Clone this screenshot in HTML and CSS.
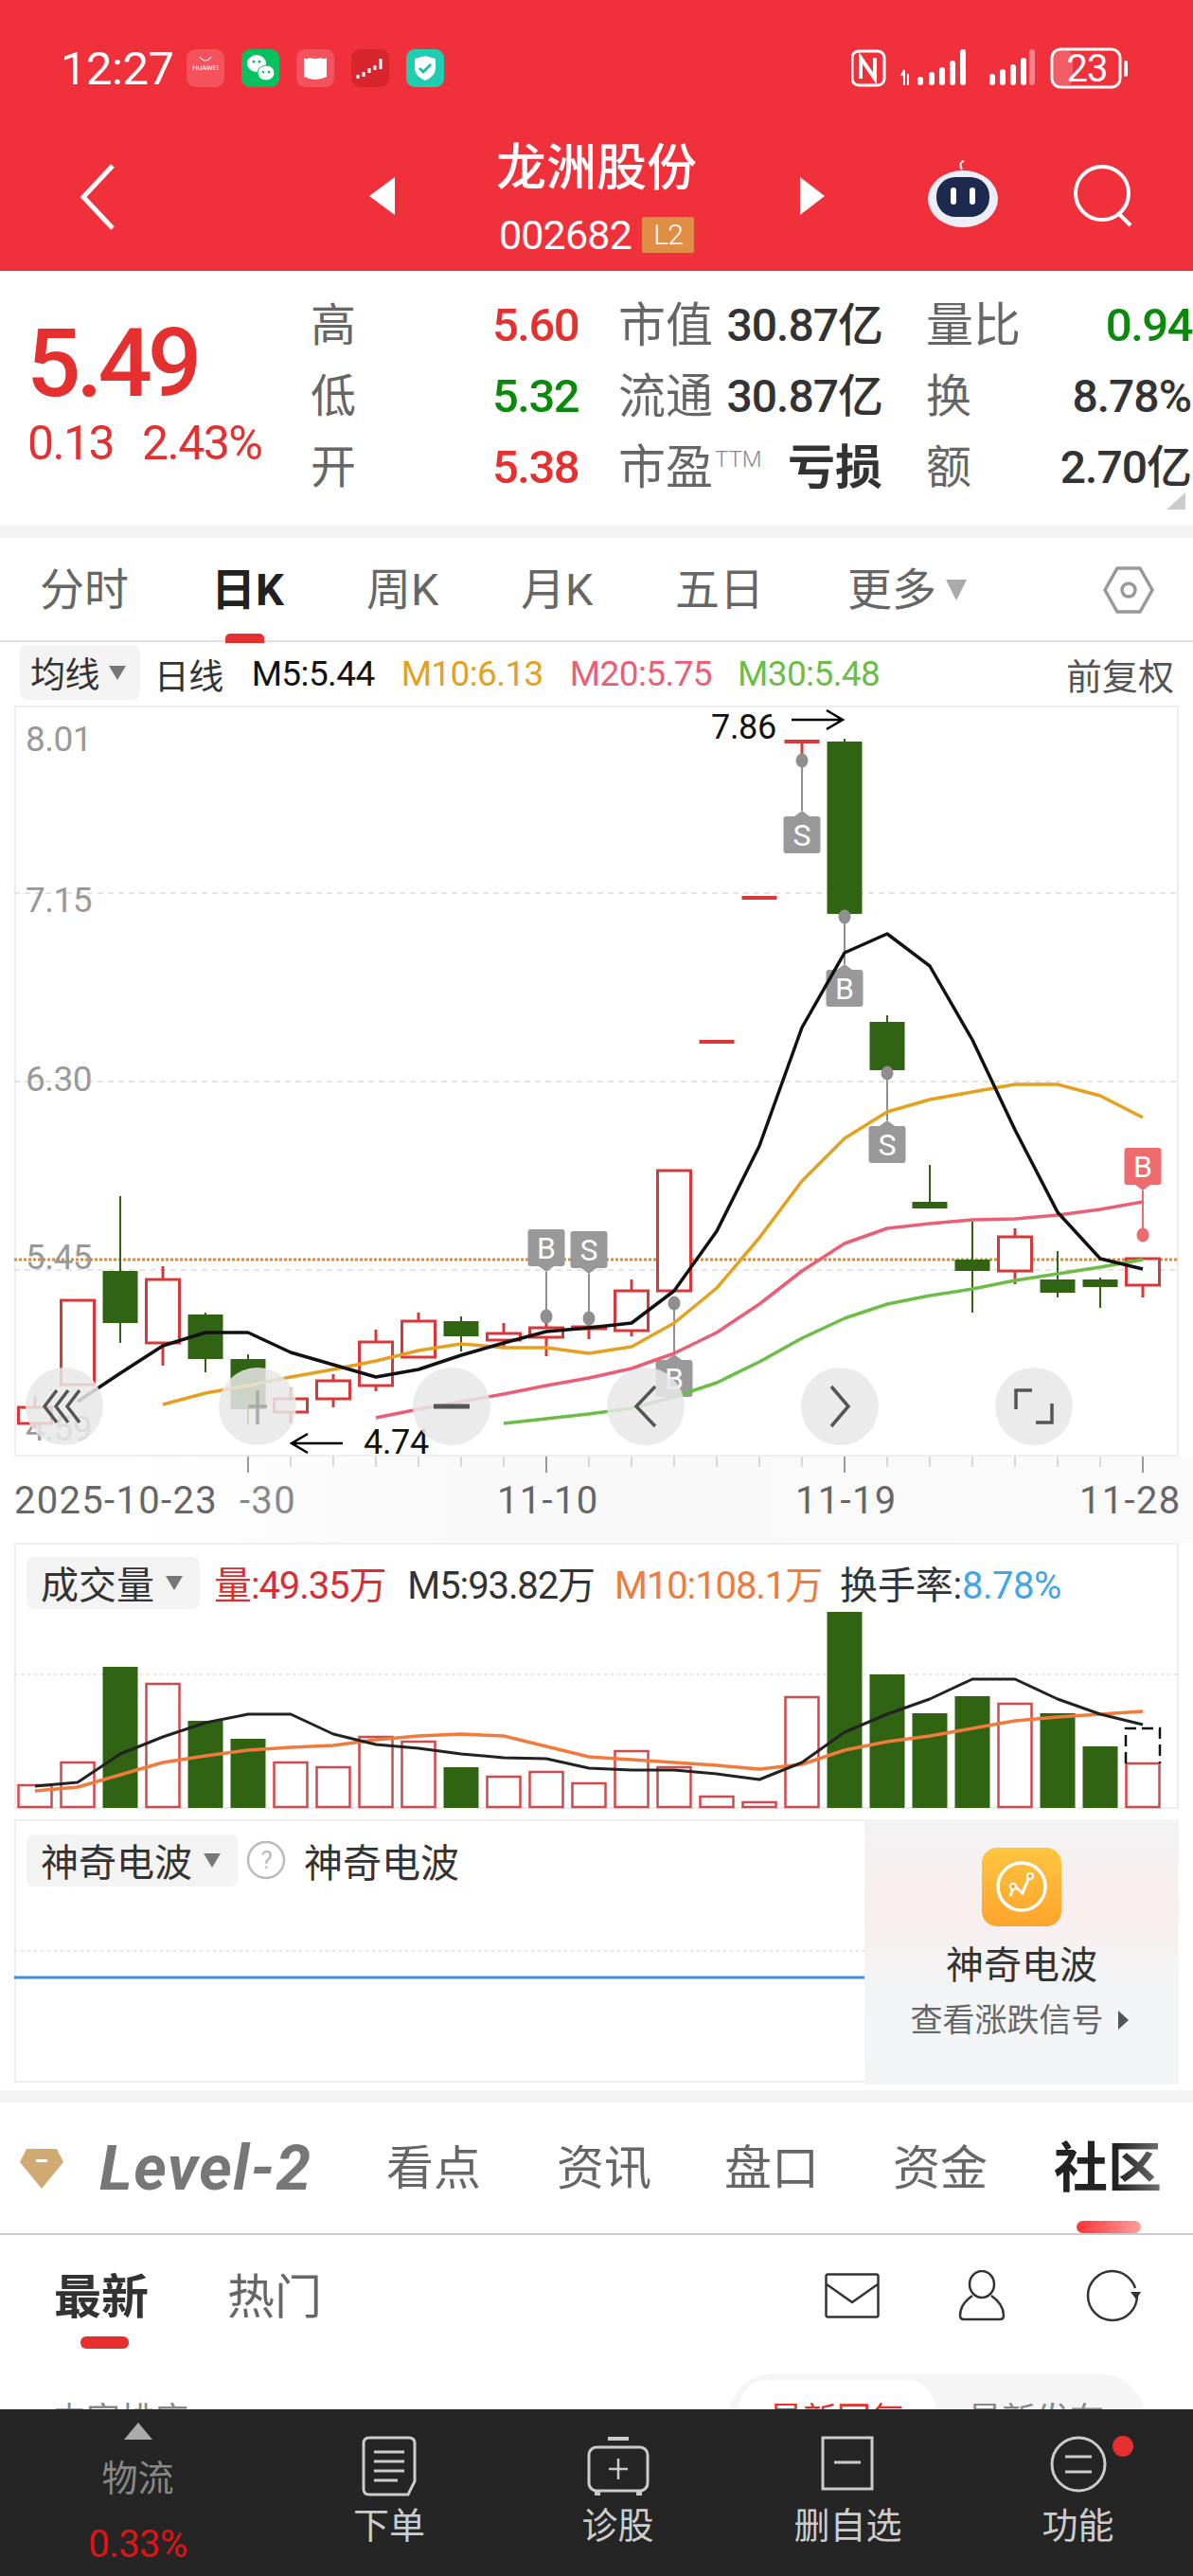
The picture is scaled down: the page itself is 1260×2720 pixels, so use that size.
FILE: index.html
```html
<!DOCTYPE html>
<html lang="zh-CN">
<head>
  <meta charset="UTF-8">
  <title>龙洲股份</title>
  <link rel="stylesheet" href="styles.css">
</head>
<body>
  <div class="page">
    <main class="content">
      <header class="top">
        <div class="status">
          <span class="time">12:27</span>
          <div class="apps">
            <span class="app app-huawei">
              <svg viewBox="0 0 40 40"><path d="M14 8q6 8 12 0" fill="none" stroke="#fff" stroke-width="1.2"/></svg>
              <em>HUAWEI</em>
            </span>
            <span class="app app-wechat">
              <svg viewBox="0 0 40 40"><ellipse cx="16" cy="15" rx="10" ry="9" fill="#fff"/><ellipse cx="26" cy="25" rx="9" ry="8" fill="#fff" stroke="#07c160"/><circle cx="13" cy="13" r="1.5" fill="#07c160"/><circle cx="19" cy="13" r="1.5" fill="#07c160"/><circle cx="23" cy="24" r="1.3" fill="#07c160"/><circle cx="29" cy="24" r="1.3" fill="#07c160"/></svg>
            </span>
            <span class="app app-book">
              <svg viewBox="0 0 40 40"><path d="M8 9q3 2 6 0 6 2 12 0 3 2 6 0v20q-12 6-24 0z" fill="#fff"/></svg>
            </span>
            <span class="app app-stock">
              <svg viewBox="0 0 40 40"><path d="M7 27v4M13 24v5M19 20v5M25 17v5M31 10v11" stroke="#fff" stroke-width="3" fill="none"/></svg>
            </span>
            <span class="app app-shield">
              <svg viewBox="0 0 40 40"><path d="M20 7l11 3v11q-1 8-11 12-10-4-11-12V10z" fill="#fff"/><path d="M14 20l4 4 8-8" fill="none" stroke="#19bfa5" stroke-width="3"/></svg>
            </span>
          </div>
          <div class="sys">
            <svg class="sys-icon" width="295" height="46" viewBox="899 49 295 46">
              <rect x="900" y="54" width="34" height="36" rx="7" fill="none" stroke="#fff" stroke-width="3"/>
              <path d="M909 83V61l15 22V61" fill="none" stroke="#fff" stroke-width="4"/>
              <path d="M952 80l3-6v16M959 78v12" fill="none" stroke="#fff" stroke-width="2"/>
              <rect x="969" y="81" width="6" height="9" rx="3" fill="#fff"/>
              <rect x="981" y="76" width="6" height="14" rx="3" fill="#fff"/>
              <rect x="992" y="71" width="6" height="19" rx="3" fill="#fff"/>
              <rect x="1003" y="64" width="6" height="26" rx="3" fill="#fff"/>
              <rect x="1014" y="52" width="6" height="38" rx="3" fill="#fff"/>
              <rect x="1045" y="78" width="6" height="12" rx="3" fill="#fff"/>
              <rect x="1056" y="73" width="6" height="17" rx="3" fill="#fff"/>
              <rect x="1067" y="68" width="6" height="22" rx="3" fill="#fff"/>
              <rect x="1078" y="61" width="6" height="29" rx="3" fill="#fff"/>
              <rect x="1087" y="52" width="6" height="38" rx="3" fill="#fff" opacity=".4"/>
              <rect x="1113" y="54" width="20" height="36" rx="6" fill="#fff" opacity=".22"/>
              <rect x="1111" y="52" width="72" height="40" rx="9" fill="none" stroke="#fff" stroke-width="3"/>
              <rect x="1187" y="64" width="4" height="17" rx="2" fill="#fff"/>
            </svg>
            <span class="battery">23</span>
          </div>
        </div>
        <div class="nav">
          <svg class="back" width="40" height="72" viewBox="0 0 40 72"><path d="M36 3L5 36l31 33" fill="none" stroke="#fff" stroke-width="5"/></svg>
          <svg class="arrow-l" width="27" height="40" viewBox="0 0 27 40"><path d="M27 0v40L0 20z" fill="#fff"/></svg>
          <div class="title">
            <h1>龙洲股份</h1>
            <div class="code">002682<span class="l2">L2</span></div>
          </div>
          <svg class="arrow-r" width="26" height="40" viewBox="0 0 26 40"><path d="M0 0v40l26-20z" fill="#fff"/></svg>
          <svg class="robot" width="78" height="72" viewBox="0 0 78 72">
            <path d="M38 10q-4-7 2-9" fill="none" stroke="#fff" stroke-width="2"/>
            <ellipse cx="39" cy="41" rx="37" ry="30" fill="#eeedfa"/>
            <rect x="11" y="18" width="56" height="42" rx="20" fill="#1d2a4d"/>
            <rect x="26" y="29" width="6" height="18" rx="3" fill="#fff"/>
            <rect x="46" y="29" width="6" height="18" rx="3" fill="#fff"/>
          </svg>
          <svg class="search" width="66" height="66" viewBox="0 0 66 66"><circle cx="31" cy="30" r="28" fill="none" stroke="#fff" stroke-width="4"/><path d="M49 52l12 12" stroke="#fff" stroke-width="4"/></svg>
        </div>
      </header>

      <section class="quote">
        <div class="last">
          <div class="price">5.49</div>
          <div class="change"><span>0.13</span><span>2.43%</span></div>
        </div>
        <div class="stats">
          <span class="label">高</span><span class="num red">5.60</span>
          <div class="pair"><span class="label wide">市值</span><b>30.87亿</b></div>
          <div class="pair"><span class="label wide">量比</span><b class="num green edge">0.94</b></div>
          <span class="label">低</span><span class="num green">5.32</span>
          <div class="pair"><span class="label wide">流通</span><b>30.87亿</b></div>
          <div class="pair"><span class="label">换</span><b>8.78%</b></div>
          <span class="label">开</span><span class="num red">5.38</span>
          <div class="pair"><span class="label wide">市盈<sup>TTM</sup></span><b class="loss">亏损</b></div>
          <div class="pair"><span class="label">额</span><b>2.70亿</b></div>
        </div>
        <i class="corner"></i>
      </section>

      <div class="band"></div>

      <nav class="ktabs">
        <span>分时</span>
        <span class="on">日K</span>
        <span>周K</span>
        <span>月K</span>
        <span>五日</span>
        <span class="more">更多<i class="caret"></i></span>
        <svg class="hex" width="54" height="52" viewBox="0 0 54 52"><path d="M15 3h24l13 23-13 23H15L2 26z" fill="none" stroke="#999" stroke-width="3.5"/><circle cx="27" cy="26" r="7" fill="none" stroke="#999" stroke-width="3.5"/></svg>
      </nav>

      <div class="ma-row">
        <span class="pill">均线<i class="caret dark"></i></span>
        <span class="ma-type">日线</span>
        <span class="m5">M5:5.44</span>
        <span class="m10">M10:6.13</span>
        <span class="m20">M20:5.75</span>
        <span class="m30">M30:5.48</span>
        <span class="adjust">前复权</span>
      </div>

      <div class="panel price-panel">
        <svg id="priceChart" viewBox="15 745 1230 793"></svg>
      </div>

      <div class="axis">
        <svg id="ticks" viewBox="15 1538 1230 18" width="1230" height="18"></svg>
        <div class="dates">
          <span>2025-10-23</span>
          <span class="faint">-30</span>
          <span>11-10</span>
          <span>11-19</span>
          <span>11-28</span>
        </div>
      </div>

      <div class="panel vol-panel">
        <svg id="volChart" class="under" viewBox="15 1629 1230 281"></svg>
        <div class="panel-head">
          <span class="pill big">成交量<i class="caret dark"></i></span>
          <span class="v-now">量:49.35万</span>
          <span>M5:93.82万</span>
          <span class="v-m10">M10:108.1万</span>
          <span class="v-turn">换手率:<em class="v-rate">8.78%</em></span>
        </div>
      </div>

      <div class="panel wave-panel">
        <svg class="under" viewBox="15 1921 1230 278">
          <path d="M15 2060H913" stroke="#ddd" stroke-width="1.5" stroke-dasharray="3 4"/>
          <path d="M15 2088H913" stroke="#3f8fdc" stroke-width="3"/>
        </svg>
        <div class="panel-head">
          <span class="pill big">神奇电波<i class="caret dark"></i></span>
          <svg class="help" width="42" height="42" viewBox="0 0 42 42"><circle cx="21" cy="21" r="19" fill="none" stroke="#bbb" stroke-width="2.5"/><text x="21" y="30" text-anchor="middle" class="help-q">?</text></svg>
          <span class="wave-name">神奇电波</span>
        </div>
        <aside class="promo">
          <svg class="promo-icon" width="84" height="83" viewBox="0 0 84 83">
            <defs><linearGradient id="gold" x1="0" y1="0" x2="0" y2="1"><stop offset="0" stop-color="#ffc53f"/><stop offset="1" stop-color="#fda42c"/></linearGradient></defs>
            <rect width="84" height="83" rx="16" fill="url(#gold)"/>
            <circle cx="42" cy="41" r="25" fill="none" stroke="#fff" stroke-width="3.5"/>
            <path d="M30 51l4-11 9 8 8-20" fill="none" stroke="#fff" stroke-width="3"/>
            <circle cx="33" cy="41" r="3" fill="#fda42c" stroke="#fff" stroke-width="2"/>
            <circle cx="51" cy="30" r="3" fill="#fda42c" stroke="#fff" stroke-width="2"/>
          </svg>
          <div class="promo-name">神奇电波</div>
          <div class="promo-link">查看涨跌信号<i class="tri"></i></div>
        </aside>
      </div>

      <div class="band low"></div>

      <nav class="feed-tabs">
        <svg class="gem" width="48" height="44" viewBox="0 0 48 44"><path d="M8 1h32l7 14-23 28L1 15z" fill="#d1aa72"/><rect x="18" y="12" width="12" height="3" fill="#fff"/></svg>
        <span class="level">Level-2</span>
        <span>看点</span>
        <span>资讯</span>
        <span>盘口</span>
        <span>资金</span>
        <span class="on">社区</span>
      </nav>

      <div class="sub-tabs">
        <span class="on">最新</span>
        <span>热门</span>
        <div class="sub-icons">
          <svg width="58" height="48" viewBox="0 0 58 48"><rect x="1.5" y="1.5" width="55" height="45" rx="2" fill="none" stroke="#333" stroke-width="2.5"/><path d="M2 12l27 19 27-19" fill="none" stroke="#333" stroke-width="2.5"/></svg>
          <svg width="50" height="54" viewBox="0 0 50 54"><ellipse cx="25" cy="15" rx="13" ry="14" fill="none" stroke="#333" stroke-width="2.5"/><path d="M15 27Q2 36 2 48q0 4 4 4h38q4 0 4-4 0-12-13-21" fill="none" stroke="#333" stroke-width="2.5"/></svg>
          <svg width="60" height="56" viewBox="0 0 60 56"><path d="M30 2A26 26 0 1 0 56 28" fill="none" stroke="#333" stroke-width="2.5"/><path d="M30 2A26 26 0 0 1 54 20" fill="none" stroke="#333" stroke-width="2.5"/><path d="M49 24h11l-5 8z" fill="#333"/></svg>
        </div>
      </div>

      <div class="sort-row">
        <span class="sort-label">内容排序</span>
        <div class="sort-pill">
          <span class="sort-on">最新回复</span>
          <span>最新发布</span>
        </div>
      </div>
    </main>

    <footer class="bar">
      <div class="bar-item ticker">
        <i class="up"></i>
        <span class="t-name">物流</span>
        <span class="t-pct">0.33%</span>
      </div>
      <div class="bar-item">
        <svg width="58" height="64" viewBox="0 0 58 64"><path d="M8 2h42q6 0 6 6v40l-7 14H8q-6 0-6-6V8q0-6 6-6z" fill="none" stroke="#ccc" stroke-width="3"/><path d="M13 17h32M13 27h32M13 37h32M13 47h25" stroke="#ccc" stroke-width="3"/></svg>
        <span>下单</span>
      </div>
      <div class="bar-item">
        <svg width="66" height="64" viewBox="0 0 66 64"><path d="M22 3h22" stroke="#ccc" stroke-width="4"/><rect x="2" y="12" width="62" height="46" rx="8" fill="none" stroke="#ccc" stroke-width="3"/><path d="M33 24v22M23 35h20" stroke="#ccc" stroke-width="2.5"/><path d="M11 58v5M55 58v5" stroke="#ccc" stroke-width="6"/></svg>
        <span>诊股</span>
      </div>
      <div class="bar-item">
        <svg width="58" height="58" viewBox="0 0 58 58"><rect x="2" y="2" width="52" height="54" fill="none" stroke="#ccc" stroke-width="3"/><path d="M14 28h28" stroke="#ccc" stroke-width="3"/></svg>
        <span>删自选</span>
      </div>
      <div class="bar-item">
        <svg width="60" height="60" viewBox="0 0 60 60"><circle cx="30" cy="30" r="28" fill="none" stroke="#ccc" stroke-width="3"/><path d="M16 22h28M16 38h28" stroke="#ccc" stroke-width="3"/></svg>
        <span>功能</span>
        <i class="dot"></i>
      </div>
    </footer>
  </div>
  <script src="chart.js"></script>
</body>
</html>
```

FILE: styles.css
```css
* {
  box-sizing: border-box;
}
body {
  margin: 0;
  background: #fff;
  font-family: Roboto, "Noto Sans CJK SC", sans-serif;
  color: #333;
}
i {
  font-style: normal;
}
.page {
  width: 1260px;
  height: 2720px;
  overflow: hidden;
  display: flex;
  flex-direction: column;
}
.content {
  height: 2544px;
  overflow: hidden;
}

/* red header */
.top {
  height: 286px;
  background: #f0313b;
  color: #fff;
}
.status {
  height: 147px;
  padding: 50px 0 0 64px;
  display: flex;
  align-items: flex-start;
}
.time {
  font-size: 49px;
  line-height: 46px;
  width: 133px;
  letter-spacing: -.5px;
}
.apps {
  display: flex;
  gap: 18px;
  padding-top: 2px;
}
.app {
  width: 40px;
  height: 40px;
  border-radius: 9px;
  display: block;
  position: relative;
  overflow: hidden;
}
.app svg {
  display: block;
}
.app em {
  position: absolute;
  left: 0;
  right: 0;
  top: 15px;
  font-style: normal;
  font-size: 7.5px;
  text-align: center;
  color: #fff;
}
.app-huawei { background: #f4535d; }
.app-wechat { background: #07c160; }
.app-book { background: #f4535d; }
.app-stock { background: #d9252c; }
.app-shield { background: #1fcdb0; }
.sys {
  margin-left: auto;
  margin-right: 66px;
  position: relative;
  height: 46px;
  margin-top: -1px;
}
.sys-icon {
  display: block;
}
.battery {
  position: absolute;
  left: 213px;
  top: 3px;
  width: 72px;
  text-align: center;
  font-size: 40px;
  line-height: 42px;
  letter-spacing: -1px;
}
.nav {
  height: 139px;
  position: relative;
  display: flex;
}
.back { position: absolute; left: 83px; top: 25px; }
.arrow-l { position: absolute; left: 390px; top: 40px; }
.arrow-r { position: absolute; left: 845px; top: 40px; }
.robot { position: absolute; left: 978px; top: 22px; }
.search { position: absolute; left: 1133px; top: 27px; }
.title {
  width: 100%;
  text-align: center;
}
.title h1 {
  margin: 0;
  font-size: 53px;
  line-height: 60px;
  font-weight: 500;
  padding-top: 1px;
}
.code {
  display: flex;
  justify-content: center;
  align-items: center;
  font-size: 43px;
  line-height: 40px;
  margin-top: 20px;
  gap: 11px;
  letter-spacing: -.8px;
}
.l2 {
  background: #e08e45;
  font-size: 30px;
  width: 55px;
  height: 38px;
  line-height: 38px;
  text-align: center;
  border-radius: 2px;
  font-weight: 300;
}

/* quote */
.quote {
  height: 268px;
  display: flex;
  position: relative;
}
.last {
  width: 328px;
  padding: 48px 0 0 28px;
  color: #e5302f;
}
.price {
  font-size: 101px;
  line-height: 100px;
  font-weight: 500;
  letter-spacing: -5px;
}
.change {
  margin-top: 9px;
  padding-left: 1px;
  font-size: 50px;
  line-height: 50px;
  display: flex;
  gap: 30px;
  letter-spacing: -1.6px;
}
.stats {
  flex: 1;
  display: grid;
  grid-template-columns: 192px 133px 279px 328px;
  grid-auto-rows: 75px;
  padding-top: 20px;
  align-items: center;
  font-size: 48px;
}
.stats .pair:nth-of-type(even) {
  margin-left: 46px;
  margin-right: 2px;
}
.stats .label {
  color: #666;
  font-size: 48px;
  line-height: 74px;
}
.stats .label.wide {
  font-size: 50px;
}
.num {
  font-size: 49px;
  font-weight: 500;
  letter-spacing: -1.5px;
}
.red { color: #e5302f; }
.green { color: #0a8a0a; }
.pair {
  display: flex;
  justify-content: space-between;
  align-items: center;
}
.pair b {
  font-weight: 500;
  color: #333;
  font-size: 48px;
  letter-spacing: -1px;
  line-height: 74px;
}
.pair b.green { color: #0a8a0a; }
.pair b.edge { font-size: 49px; margin-right: -1px; letter-spacing: -1.5px; }
.pair b.loss {
  font-weight: 700;
  font-size: 50px;
  letter-spacing: 0;
}
sup {
  font-size: 24px;
  line-height: 0;
  font-weight: 300;
  color: #888;
  vertical-align: 18px;
  margin-left: 2px;
}
.corner {
  position: absolute;
  right: 8px;
  bottom: 16px;
  border-left: 20px solid transparent;
  border-bottom: 18px solid #ccc;
}
.band {
  height: 14px;
  background: #f4f4f4;
}
.band.low {
  height: 13px;
  margin-top: 8px;
}

/* k-line tabs */
.ktabs {
  height: 110px;
  border-bottom: 2px solid #e2e2e2;
  padding: 0 0 0 42px;
  display: grid;
  grid-template-columns: 181px 164px 163px 163px 182px 1fr;
  align-items: center;
  font-size: 47px;
  color: #666;
  position: relative;
}
.ktabs span {
  line-height: 110px;
}
.ktabs .on {
  color: #222;
  font-weight: 700;
  position: relative;
}
.ktabs .on::after {
  content: "";
  position: absolute;
  left: 15px;
  bottom: -1px;
  width: 41px;
  height: 10px;
  border-radius: 5px 5px 0 0;
  background: #e5302f;
}
.more {
  display: flex;
  align-items: center;
}
.caret {
  display: inline-block;
  border-left: 11px solid transparent;
  border-right: 11px solid transparent;
  border-top: 22px solid #aaa;
  margin-left: 10px;
}
.caret.dark {
  border-left-width: 9px;
  border-right-width: 9px;
  border-top: 15px solid #777;
}
.hex {
  position: absolute;
  left: 1165px;
  top: 29px;
}

/* moving average row */
.ma-row {
  height: 67px;
  display: flex;
  align-items: center;
  padding-left: 21px;
  font-size: 37px;
  letter-spacing: -.6px;
  color: #111;
}
.pill {
  background: #f3f3f3;
  border-radius: 8px;
  height: 58px;
  padding: 0 15px 0 11px;
  display: flex;
  align-items: center;
  color: #333;
  margin-top: -3px;
}
.ma-type {
  margin: 0 30px 0 15px;
  color: #333;
}
.m10 { color: #e5a11e; margin-left: 28px; }
.m20 { color: #ea5f76; margin-left: 28px; }
.m30 { color: #6cbd45; margin-left: 27px; }
.adjust {
  margin-left: auto;
  margin-right: 20px;
  color: #555;
  font-size: 38px;
  letter-spacing: 0;
}

/* chart panels */
.panel {
  margin: 0 15px;
  position: relative;
  box-shadow: inset 0 0 0 2px #eee;
}
.panel svg {
  display: block;
}
.price-panel {
  height: 793px;
}
.price-panel svg {
  width: 1230px;
  height: 793px;
}
.axis-num {
  font-size: 37px;
  fill: #999;
  letter-spacing: -.5px;
}
.sig {
  font-size: 32px;
  fill: #fff;
  text-anchor: middle;
}
.peak {
  font-size: 36px;
  fill: #111;
  letter-spacing: -.3px;
}
.under {
  position: absolute;
  left: 0;
  top: 0;
  width: 100%;
  height: 100%;
}
.axis {
  height: 91px;
  padding: 0 15px;
  background: linear-gradient(90deg, #fff 10%, #f9f9f9 40%, #fafafa 90%);
}
.axis svg {
  display: block;
}
.dates {
  display: grid;
  grid-template-columns: 238px 272px 315px 300px 105px;
  font-size: 40px;
  line-height: 56px;
  color: #666;
  letter-spacing: 1.3px;
  margin-top: 1px;
}
.dates span {
  white-space: nowrap;
}
.dates .faint {
  color: #888;
}
.vol-panel {
  height: 281px;
  margin-bottom: 11px;
}
.wave-panel {
  height: 278px;
}
.panel-head {
  position: relative;
  display: flex;
  align-items: center;
  padding: 13px 0 0 13px;
  font-size: 40px;
  color: #333;
  gap: 23px;
  letter-spacing: -1.1px;
}
.pill.big {
  font-size: 40px;
  height: 55px;
  margin: 0;
  padding: 0 18px 0 15px;
  letter-spacing: 0;
}
.pill.big .caret {
  margin-left: 12px;
}
.v-now { color: #d92e32; margin-left: -8px; }
.v-m10 { color: #f07b3c; margin-left: -2px; }
.v-turn { letter-spacing: -.2px; margin-left: -4px; }
.v-rate { color: #3fa7e8; font-style: normal; letter-spacing: -.5px; }
.help {
  margin-left: -14px;
}
.help-q {
  font-size: 26px;
  fill: #bbb;
}
.wave-name {
  font-size: 41px;
  letter-spacing: 0;
  margin-left: -4px;
}
.promo {
  position: absolute;
  right: 0;
  top: 0;
  width: 332px;
  height: 280px;
  background: linear-gradient(180deg, #f3f3f4 0%, #f9eeee 35%, #f2f5f6 65%, #f3f4f6 100%);
  display: flex;
  flex-direction: column;
  align-items: center;
  padding-top: 30px;
}
.promo-name {
  font-size: 40px;
  line-height: 50px;
  margin-top: 17px;
  color: #333;
}
.promo-link {
  font-size: 34px;
  line-height: 44px;
  color: #666;
  margin-top: 10px;
  display: flex;
  align-items: center;
  gap: 15px;
  padding-right: 0;
  margin-right: 5px;
}
.tri {
  border-top: 10px solid transparent;
  border-bottom: 10px solid transparent;
  border-left: 11px solid #555;
}

/* feed tabs */
.feed-tabs {
  height: 140px;
  border-bottom: 2px solid #ccc;
  position: relative;
  display: grid;
  grid-template-columns: 303px 180px 177px 178px 170px 1fr;
  padding-left: 105px;
  align-items: center;
  font-size: 50px;
  color: #666;
}
.feed-tabs span {
  line-height: 140px;
}
.gem {
  position: absolute;
  left: 20px;
  top: 48px;
}
.level {
  font-size: 66px;
  font-weight: 700;
  font-style: italic;
  color: #777;
  letter-spacing: 1.5px;
}
.feed-tabs .on {
  font-weight: 700;
  font-size: 57px;
  background: linear-gradient(90deg, #222 45%, #aaa 100%);
  background-clip: text;
  -webkit-background-clip: text;
  color: transparent;
  position: relative;
}
.feed-tabs .on::after {
  content: "";
  position: absolute;
  left: 24px;
  top: 125px;
  width: 68px;
  height: 13px;
  border-radius: 7px;
  background: linear-gradient(90deg, #f33, #f9a0a0);
}
.sub-tabs {
  height: 146px;
  position: relative;
  display: flex;
  align-items: flex-start;
  font-size: 50px;
  color: #666;
  padding: 25px 0 0 57px;
  gap: 83px;
}
.sub-tabs .on {
  color: #333;
  font-weight: 700;
  position: relative;
}
.sub-tabs .on::after {
  content: "";
  position: absolute;
  left: 28px;
  top: 82px;
  width: 51px;
  height: 13px;
  border-radius: 6px;
  background: #e5302f;
}
.sub-icons {
  margin-left: auto;
  margin-right: 55px;
  display: flex;
  gap: 83px;
  align-items: center;
  padding-top: 11px;
}
.sort-row {
  display: flex;
  justify-content: space-between;
  padding: 0 50px 0 55px;
  font-size: 36px;
  color: #888;
}
.sort-label {
  padding-top: 20px;
}
.sort-pill {
  width: 442px;
  height: 100px;
  background: #f5f5f5;
  border-radius: 50px 50px 0 0;
  display: flex;
  padding: 7px 0 0 12px;
  gap: 34px;
}
.sort-on {
  width: 208px;
  text-align: center;
  background: #fff;
  border-radius: 30px 30px 0 0;
  color: #e5302f;
  padding-top: 13px;
}
.sort-pill span:last-child {
  padding-top: 13px;
}

/* bottom bar */
.bar {
  flex: 1;
  background: #252525;
  position: relative;
  display: grid;
  grid-template-columns: 291px 240px 243px 243px 243px;
  color: #ccc;
  font-size: 38px;
}
.bar-item {
  display: flex;
  flex-direction: column;
  align-items: center;
  padding-top: 28px;
  position: relative;
}
.bar-item svg {
  flex: none;
}
.bar-item > span {
  position: absolute;
  top: 98px;
  line-height: 50px;
}
.ticker {
  padding-top: 14px;
}
.up {
  border-left: 15px solid transparent;
  border-right: 15px solid transparent;
  border-bottom: 18px solid #aaa;
}
.ticker .t-name {
  top: 48px;
  color: #888;
}
.ticker .t-pct {
  top: 118px;
  color: #e01414;
  font-size: 40px;
  letter-spacing: -.6px;
}
.dot {
  position: absolute;
  left: 158px;
  top: 28px;
  width: 22px;
  height: 22px;
  border-radius: 50%;
  background: #e5302f;
}
```

FILE: chart.js
```js
// all coordinates are page pixels, each svg viewBox starts at its panel's corner
const NS = "http://www.w3.org/2000/svg";
const RED = "#d8383a";
const GREEN = "#316412";
const X = (i) => 37 + 45 * i;

function add(svg, tag, attrs, text) {
  const el = document.createElementNS(NS, tag);
  for (const k in attrs) el.setAttribute(k, attrs[k]);
  if (text) el.textContent = text;
  svg.appendChild(el);
  return el;
}

function line(svg, pts, color, width, start) {
  const d = pts.map((y, n) => X(n + (start || 0)) + "," + y).join(" ");
  add(svg, "polyline", { points: d, fill: "none", stroke: color, "stroke-width": width, "stroke-linejoin": "round" });
}

// wickTop, bodyTop, bodyBottom, wickBottom, up
const candles = [
  [1474, 1486, 1503, 1508, 1], [1373, 1373, 1462, 1462, 1], [1263, 1342, 1397, 1418, 0],
  [1337, 1351, 1418, 1442, 1], [1386, 1388, 1435, 1449, 0], [1430, 1435, 1488, 1504, 0],
  [1465, 1477, 1491, 1503, 1], [1451, 1458, 1477, 1486, 1], [1404, 1417, 1463, 1469, 1],
  [1386, 1395, 1433, 1433, 1], [1390, 1395, 1411, 1427, 0], [1397, 1408, 1415, 1424, 1],
  [1392, 1402, 1412, 1432, 1], [1392, 1401, 1403, 1414, 1], [1351, 1363, 1405, 1411, 1],
  [1236, 1236, 1363, 1363, 1], [1100, 1098, 1102, 1102, 2], [948, 946, 950, 950, 2],
  [783, 781, 785, 802, 2], [780, 783, 965, 965, 0], [1072, 1079, 1130, 1130, 0],
  [1230, 1269, 1276, 1276, 0], [1290, 1330, 1342, 1386, 0], [1297, 1306, 1342, 1356, 1],
  [1321, 1351, 1365, 1370, 0], [1349, 1351, 1359, 1381, 0], [1329, 1329, 1357, 1370, 1]
];

const m5 = [1480, 1450, 1421, 1407, 1407, 1428, 1441, 1454, 1446, 1431, 1418, 1406, 1402, 1397, 1363, 1300, 1210, 1085, 1006, 986, 1020, 1098, 1193, 1280, 1329, 1340];
const m10 = [1483, 1471, 1463, 1454, 1446, 1437, 1426, 1419, 1423, 1423, 1429, 1422, 1397, 1360, 1307, 1247, 1202, 1174, 1161, 1153, 1145, 1145, 1157, 1180];
const m20 = [1497, 1488, 1480, 1472, 1463, 1455, 1445, 1429, 1407, 1377, 1342, 1313, 1297, 1292, 1288, 1287, 1283, 1277, 1269];
const m30 = [1503, 1498, 1493, 1487, 1475, 1460, 1438, 1413, 1392, 1377, 1368, 1361, 1352, 1345, 1338, 1330];

// candle index, letter, dot y, label top, colour
const signals = [
  [12, "B", 1390, 1298], [13, "S", 1392, 1300], [15, "B", 1376, 1436],
  [18, "S", 803, 862], [19, "B", 968, 1024], [20, "S", 1133, 1189], [26, "B", 1304, 1212, "#ee6b70"]
];

function drawPrice(svg) {
  for (const y of [943, 1142, 1341]) {
    add(svg, "path", { d: `M15 ${y}H1245`, stroke: "#ddd", "stroke-width": 1.5, "stroke-dasharray": "6 5" });
  }
  add(svg, "path", { d: "M15 1330H1245", stroke: "#d98a3c", "stroke-width": 3, "stroke-dasharray": "3 2" });

  const axis = [[8.01, 793], [7.15, 963], [6.30, 1152], [5.45, 1340], [4.59, 1521]];
  axis.forEach(([v, y]) => add(svg, "text", { x: 27, y: y, class: "axis-num" }, v.toFixed(2)));

  candles.forEach(([wt, bt, bb, wb, kind], i) => {
    const x = X(i);
    const color = kind === 0 ? GREEN : RED;
    const w = kind === 0 ? 2 : 3;
    add(svg, "path", { d: `M${x} ${wt}V${bt}M${x} ${bb}V${wb}`, stroke: color, "stroke-width": w });
    if (kind === 0) add(svg, "rect", { x: x - 18.5, y: bt, width: 37, height: bb - bt, fill: GREEN });
    if (kind === 1) add(svg, "rect", { x: x - 17.5, y: bt, width: 35, height: bb - bt, fill: "#fff", stroke: RED, "stroke-width": 3 });
    if (kind === 2) add(svg, "rect", { x: x - 18.5, y: bt, width: 37, height: bb - bt, fill: RED });
  });

  signals.forEach(([i, letter, dot, top, color]) => {
    const x = X(i);
    const c = color || "#8f8f8f";
    const fill = color || "#999";
    const below = top > dot;
    const tip = below ? top - 6 : top + 45;
    add(svg, "path", { d: `M${x} ${dot}V${tip}`, stroke: c, "stroke-width": 2 });
    add(svg, "ellipse", { cx: x, cy: dot, rx: 6.5, ry: 7.5, fill: c });
    add(svg, "path", { d: `M${x - 8} ${below ? top : top + 39}L${x} ${tip}L${x + 8} ${below ? top : top + 39}z`, fill: fill });
    add(svg, "rect", { x: x - 19.5, y: top, width: 39, height: 39, rx: 3, fill: fill });
    add(svg, "text", { x: x, y: top + 31, class: "sig" }, letter);
  });

  line(svg, m10, "#e5a11e", 3.5, 3);
  line(svg, m20, "#ea5f76", 3.5, 8);
  line(svg, m30, "#6cbd45", 3.5, 11);
  line(svg, m5, "#111", 3.5, 1);

  add(svg, "text", { x: 751, y: 780, class: "peak" }, "7.86");
  add(svg, "path", { d: "M836 760H890M873 750l17 10-17 10", fill: "none", stroke: "#000", "stroke-width": 2.5 });
  add(svg, "text", { x: 384, y: 1535, class: "peak" }, "4.74");
  add(svg, "path", { d: "M362 1524H308M325 1514l-17 10 17 10", fill: "none", stroke: "#000", "stroke-width": 2.5 });

  const icons = [
    "M60 1468l-13 17 13 17M72 1468l-13 17 13 17M84 1468l-13 17 13 17",
    "M272 1468v36M262 1485h20",
    "M458 1485h38",
    "M692 1464l-20 21 20 21",
    "M878 1464l18 21-18 21",
    "M1073 1488v-20h17M1111 1482v20h-17"
  ];
  [68, 272, 477, 682, 887, 1092].forEach((x, n) => {
    add(svg, "circle", { cx: x, cy: 1485, r: 41, fill: "rgba(232,232,232,.85)" });
    add(svg, "path", { d: icons[n], fill: "none", stroke: n === 1 ? "#aaa" : "#555", "stroke-width": n === 2 ? 5 : 3.5 });
  });
}

function drawTicks(svg) {
  candles.forEach((c, i) => {
    if (i < 5) return;
    const major = (i - 5) % 7 === 0;
    add(svg, "path", { d: `M${X(i)} 1538V${major ? 1555 : 1549}`, stroke: major ? "#999" : "#ccc", "stroke-width": major ? 2 : 1.5 });
  });
}

const vols = [
  [1885, 1], [1861, 1], [1760, 0], [1778, 1], [1817, 0], [1836, 0], [1861, 1], [1866, 1], [1834, 1],
  [1839, 1], [1866, 0], [1876, 1], [1871, 1], [1883, 1], [1849, 1], [1866, 1], [1897, 1], [1903, 1],
  [1792, 1], [1702, 0], [1768, 0], [1809, 0], [1791, 0], [1799, 1], [1809, 0], [1844, 0], [1862, 1]
];
const vm5 = [1886, 1882, 1852, 1834, 1819, 1810, 1810, 1831, 1842, 1846, 1852, 1856, 1857, 1867, 1869, 1869, 1873, 1879, 1861, 1829, 1810, 1794, 1773, 1773, 1794, 1810, 1821];
const vm10 = [1891, 1887, 1874, 1861, 1854, 1848, 1845, 1843, 1837, 1833, 1831, 1833, 1844, 1855, 1858, 1861, 1864, 1868, 1863, 1848, 1839, 1833, 1825, 1817, 1813, 1810, 1807];

function drawVolume(svg) {
  add(svg, "path", { d: "M15 1768H1245", stroke: "#ddd", "stroke-width": 1.5, "stroke-dasharray": "3 4" });
  vols.forEach(([top, up], i) => {
    const x = X(i);
    if (up) add(svg, "rect", { x: x - 17.5, y: top, width: 35, height: 1908 - top, fill: "#fff", stroke: "#cf4a4c", "stroke-width": 2.5 });
    else add(svg, "rect", { x: x - 18.5, y: top, width: 37, height: 1909 - top, fill: GREEN });
  });
  add(svg, "path", { d: "M1189 1862V1825H1225V1862", fill: "none", stroke: "#111", "stroke-width": 2.5, "stroke-dasharray": "12 6" });
  line(svg, vm10, "#f07b3c", 3.5);
  line(svg, vm5, "#222", 3);
}

drawPrice(document.getElementById("priceChart"));
drawTicks(document.getElementById("ticks"));
drawVolume(document.getElementById("volChart"));
```
